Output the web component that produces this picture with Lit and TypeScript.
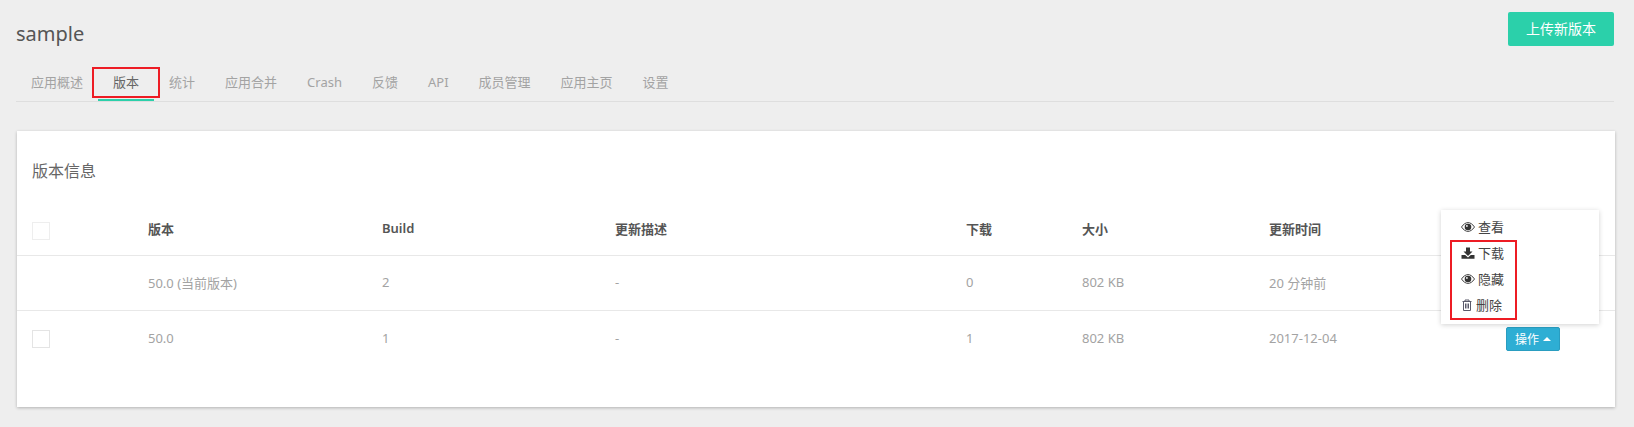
import { LitElement, html, css, svg } from "lit";
import { customElement } from "lit/decorators.js";

const eye = svg`<path d="M0.5 6C2.5 3 4.8 1.6 7 1.6S11.5 3 13.5 6C11.5 9 9.2 10.4 7 10.4S2.5 9 0.5 6Z" fill="none" stroke="#444" stroke-width="1"/><circle cx="7" cy="6" r="3.3" fill="#333"/><circle cx="5.9" cy="4.9" r="0.9" fill="#fff"/>`;
const download = svg`<path d="M5 0.5H9V4.5H11.5L7 9L2.5 4.5H5Z" fill="#333"/><path d="M0.5 8H4.2L7 10.6L9.8 8H13.5V11.8H0.5Z" fill="#333"/>`;
const trash = svg`<path d="M1.5 2.5H10.5M4 2.5V1H8V2.5M2.5 2.5V11.5H9.5V2.5M4.5 4.5V9.5M6 4.5V9.5M7.5 4.5V9.5" fill="none" stroke="#5a5a6a" stroke-width="1"/>`;

const TABS = ["应用概述", "版本", "统计", "应用合并", "Crash", "反馈", "API", "成员管理", "应用主页", "设置"];

@customElement("app-root")
export class AppRoot extends LitElement {
  static styles = css`
    :host {
      display: block;
      width: 1634px;
      height: 427px;
      overflow: hidden;
      background: #eeeeee;
      font-family: "Noto Sans", "Noto Sans CJK SC", sans-serif;
      color: #555;
      box-sizing: border-box;
      padding: 12px 20px 0 16px;
    }
    * { box-sizing: border-box; }
    .head { display: flex; justify-content: space-between; align-items: flex-start; height: 54px; }
    .title { font-size: 20px; line-height: 28px; margin-top: 8px; color: #555; }
    .upload {
      width: 106px; height: 34px; background: #2bd0aa; border-radius: 2px; color: #fff;
      font-size: 14px; line-height: 34px; text-align: center; border: 0; padding: 0; font-family: inherit;
    }
    .tabs { display: flex; height: 36px; border-bottom: 1px solid #dedede; }
    .tab { position: relative; padding: 0 15px; font-size: 13px; line-height: 32px; color: #a3a3a3; height: 35px; }
    .tab.active { color: #666; border-bottom: 2px solid #2bd0aa; }
    .tab.active::after {
      content: ""; position: absolute; left: -6px; right: -6px; top: 1px; height: 27px; border: 2px solid #ed1c24;
    }
    .card {
      margin: 29px -1px 0 1px; height: 276px; background: #fff; box-shadow: 0 1px 3px rgba(0,0,0,0.25);
      padding: 26px 0 0 0;
    }
    .card h2 { margin: 0 0 0 15px; font-weight: 400; font-size: 16px; line-height: 28px; color: #666; }
    .row {
      display: grid; grid-template-columns: 131px 234px 233px 351px 116px 187px 187px 1fr;
      align-items: center; height: 55px; border-bottom: 1px solid #e8e8e8; font-size: 13px; color: #a3a3a3;
    }
    .row > .cell { margin-top: -2px; }
    .row.header { margin-top: 18px; height: 53px; font-weight: 600; color: #555; }
    .row.last { border-bottom: 0; }
    .cb { margin-left: 15px; width: 18px; height: 18px; border: 1px solid #e4e4e4; background: #fff; }
    .row.header .cb { margin-top: 4px; border-color: #eeeeee; }
    .op-cell { position: relative; padding-left: 50px; }
    .op {
      display: flex; align-items: center; justify-content: center; gap: 4px; width: 54px; height: 24px;
      background: #2eaed4; border: 1px solid #2a9dc0; border-radius: 2px; color: #fff; font-size: 12px;
    }
    .caret { width: 0; height: 0; border: 4px solid transparent; border-top: 0; border-bottom-color: #fff; }
    .menu {
      position: absolute; left: -15px; bottom: 27px; width: 158px; height: 114px; background: #fff;
      box-shadow: 0 1px 5px rgba(0,0,0,0.18); padding: 4px 0 0 20px; z-index: 2;
    }
    .item { display: flex; align-items: center; gap: 3px; height: 26px; font-size: 13px; color: #444; font-weight: 400; }
    .item svg { flex: none; }
    .mark { position: absolute; left: 9px; top: 30px; width: 67px; height: 80px; border: 2px solid #ed1c24; }
  `;

  render() {
    return html`
      <div class="head">
        <div class="title">sample</div>
        <button class="upload">上传新版本</button>
      </div>
      <div class="tabs">
        ${TABS.map((t, i) => html`<div class="tab ${i === 1 ? "active" : ""}">${t}</div>`)}
      </div>
      <div class="card">
        <h2>版本信息</h2>
        <div class="row header">
          <div><div class="cb"></div></div>
          ${["版本", "Build", "更新描述", "下载", "大小", "更新时间", ""].map((c) => html`<div class="cell">${c}</div>`)}
        </div>
        <div class="row">
          <div></div>
          ${["50.0 (当前版本)", "2", "-", "0", "802 KB", "20 分钟前", ""].map((c) => html`<div class="cell">${c}</div>`)}
        </div>
        <div class="row last">
          <div><div class="cb"></div></div>
          ${["50.0", "1", "-", "1", "802 KB", "2017-12-04"].map((c) => html`<div class="cell">${c}</div>`)}
          <div class="op-cell">
            <div class="menu">
              <div class="item"><svg width="14" height="12" viewBox="0 0 14 12">${eye}</svg>查看</div>
              <div class="item"><svg width="14" height="12" viewBox="0 0 14 12">${download}</svg>下载</div>
              <div class="item"><svg width="14" height="12" viewBox="0 0 14 12">${eye}</svg>隐藏</div>
              <div class="item"><svg width="12" height="12" viewBox="0 0 12 12">${trash}</svg>删除</div>
              <div class="mark"></div>
            </div>
            <div class="op">操作<span class="caret"></span></div>
          </div>
        </div>
      </div>
    `;
  }
}
